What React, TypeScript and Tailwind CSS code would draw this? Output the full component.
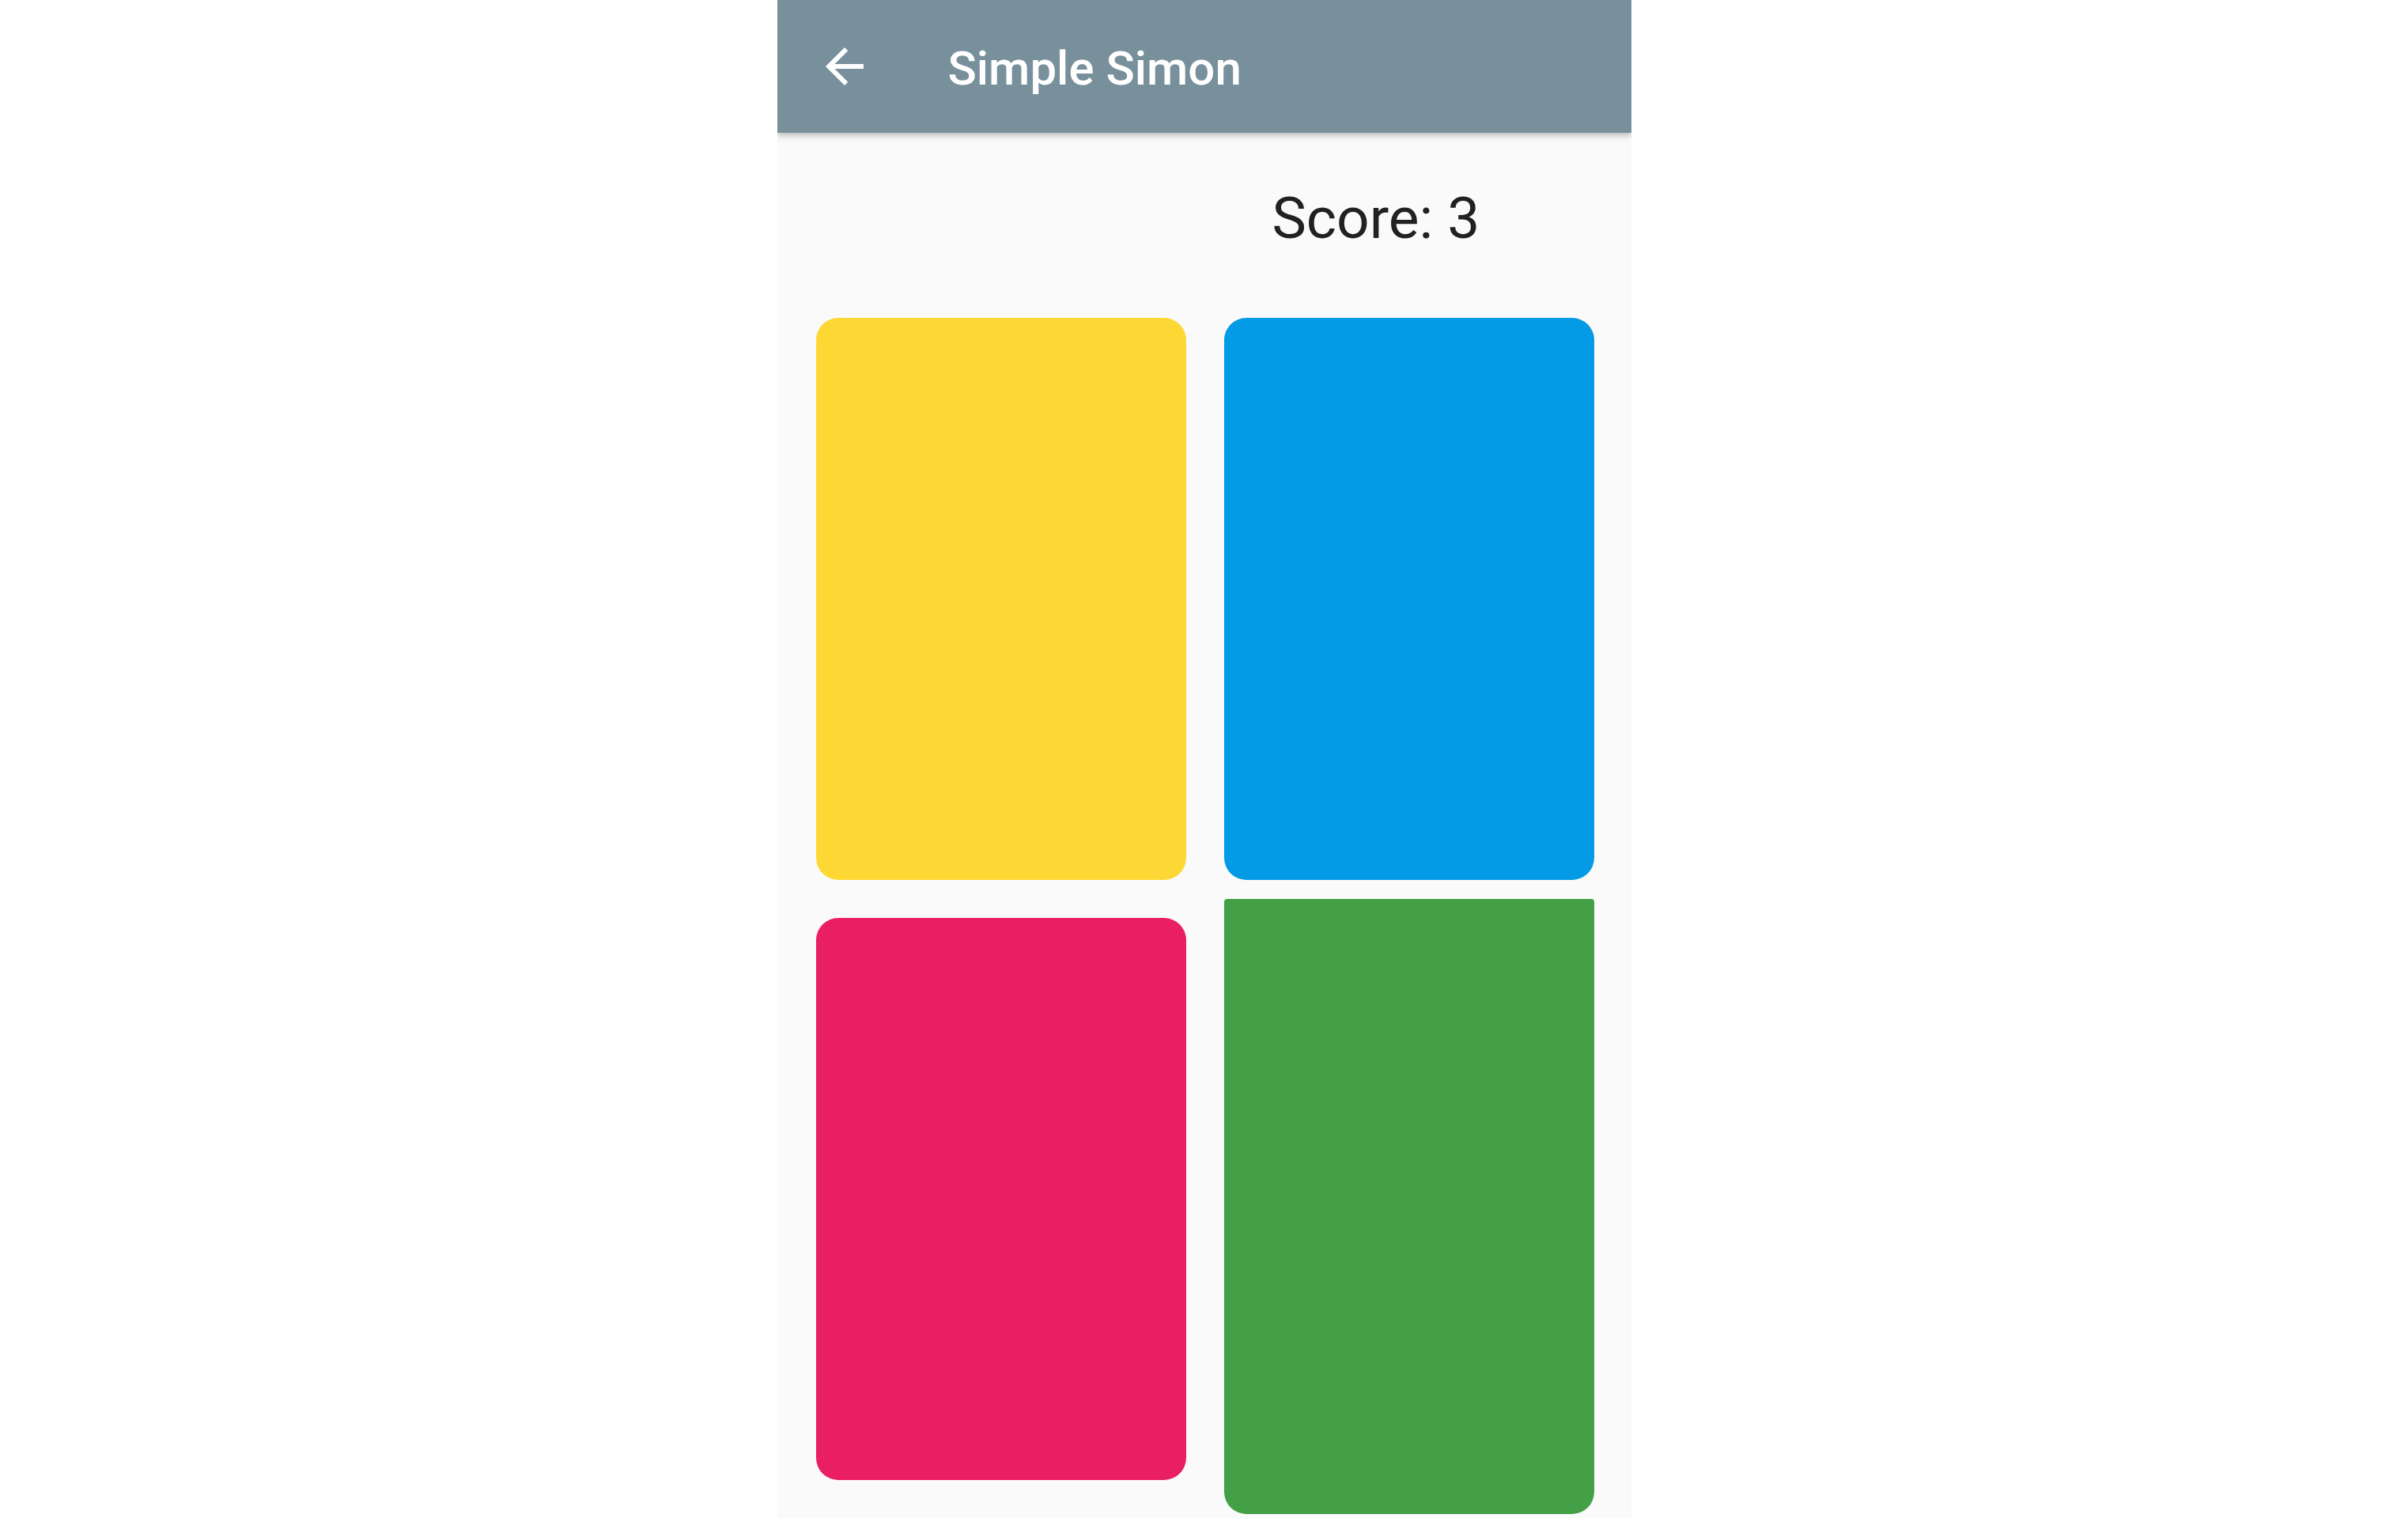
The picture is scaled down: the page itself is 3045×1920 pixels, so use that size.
export default function App() {
  return (
    <div className="w-full h-[1920px] bg-white flex justify-center">
      <div
        className="w-[1080px] h-[1920px] bg-[#fafafa] overflow-hidden flex flex-col"
        style={{ fontFamily: "Roboto, 'Noto Sans', sans-serif" }}
      >
        <header className="relative z-10 h-[168px] shrink-0 bg-[#78909c] flex items-center pl-[49px] shadow-[0_3px_8px_rgba(0,0,0,0.28)]">
          <svg viewBox="0 0 24 24" className="w-[72px] h-[72px] fill-white">
            <path d="M20 11H7.83l5.59-5.59L12 4l-8 8 8 8 1.41-1.41L7.83 13H20v-2z" />
          </svg>
          <h1 className="ml-[95px] mt-[5px] text-white text-[60px] leading-[60px] font-medium">
            Simple Simon
          </h1>
        </header>

        <div className="pt-[72px] pl-[626px] text-[73px] leading-[73px] text-[#212121]">
          Score: 3
        </div>

        <div className="mt-[89px] px-[49px] grid grid-cols-[468px_468px] gap-[48px]">
          <div className="h-[711px] rounded-[28px] bg-[#fdd835]" />
          <div className="h-[711px] rounded-[28px] bg-[#039be5]" />
          <div className="h-[711px] rounded-[28px] bg-[#e91e63]" />
          <div className="h-[778px] -mt-[24px] rounded-t-[4px] rounded-b-[28px] bg-[#43a047]" />
        </div>
      </div>
    </div>
  )
}
